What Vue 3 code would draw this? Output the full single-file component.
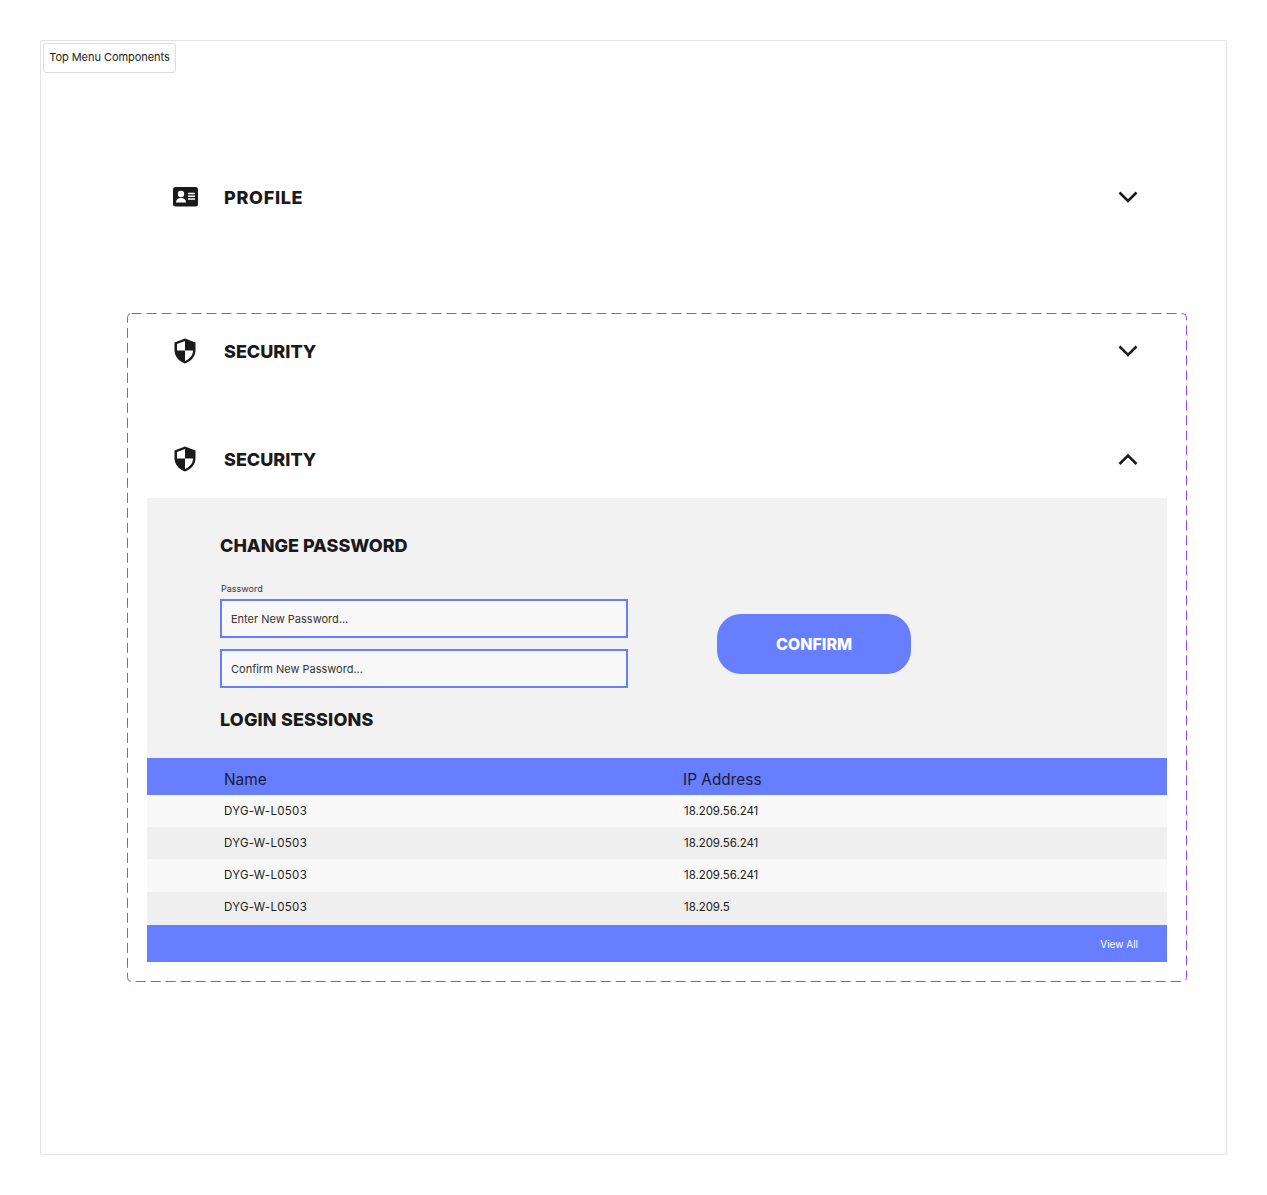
<script setup>
const sessions = [
  { name: 'DYG-W-L0503', ip: '18.209.56.241' },
  { name: 'DYG-W-L0503', ip: '18.209.56.241' },
  { name: 'DYG-W-L0503', ip: '18.209.56.241' },
  { name: 'DYG-W-L0503', ip: '18.209.5' },
]
</script>

<template>
  <div class="page">
    <div class="frame">
      <div class="tag">Top Menu Components</div>

      <div class="row profile">
        <svg class="icon" width="26" height="20" viewBox="0 0 26 20">
          <rect x="0" y="0" width="25" height="19.5" rx="2.5" fill="#1a1a1a" />
          <circle cx="8" cy="7" r="3.2" fill="#fff" />
          <path d="M3 15.5c0-3 2-4.500 5-4.500s5 1.500 5 4.500z" fill="#fff" />
          <path d="M15 6.400h7M15 9.200h7M15 12h7" stroke="#fff" stroke-width="1.5" fill="none" />
        </svg>
        <span class="title title-profile">PROFILE</span>
        <svg class="chev" width="20" height="12" viewBox="0 0 20 12">
          <path d="M1.500 1.500L10 10l8.500-8.500" fill="none" stroke="#1a1a1a" stroke-width="2.500" />
        </svg>
      </div>

      <section class="group">
        <svg class="dash" aria-hidden="true">
          <rect class="dash-rect" x="0.5" y="0.5" rx="4" ry="4" />
        </svg>

        <div class="row first">
          <svg class="icon shield" width="22" height="26" viewBox="0 0 22 26">
            <path d="M11 0.500L21.500 4.500V12c0 6.500-4.300 11.200-10.500 13.500C4.800 23.200.5 18.500.5 12V4.500z" fill="#1a1a1a" />
            <path d="M11 3L3 6v6.500h8zM11 12.500V23c4.700-2 8-5.700 8-10.500z" fill="#fff" />
          </svg>
          <span class="title">SECURITY</span>
          <svg class="chev" width="20" height="12" viewBox="0 0 20 12">
            <path d="M1.500 1.500L10 10l8.500-8.500" fill="none" stroke="#1a1a1a" stroke-width="2.500" />
          </svg>
        </div>

        <div class="row second">
          <svg class="icon shield" width="22" height="26" viewBox="0 0 22 26">
            <path d="M11 0.500L21.500 4.500V12c0 6.500-4.300 11.200-10.500 13.500C4.800 23.200.5 18.500.5 12V4.500z" fill="#1a1a1a" />
            <path d="M11 3L3 6v6.500h8zM11 12.500V23c4.700-2 8-5.700 8-10.500z" fill="#fff" />
          </svg>
          <span class="title">SECURITY</span>
          <svg class="chev" width="20" height="12" viewBox="0 0 20 12">
            <path d="M1.500 11L10 2.500l8.500 8.500" fill="none" stroke="#1a1a1a" stroke-width="2.500" />
          </svg>
        </div>

        <div class="panel">
          <div class="form-area">
            <h2 class="heading">CHANGE PASSWORD</h2>
            <div class="form-row">
              <div class="fields">
                <label class="label">Password</label>
                <input class="field" type="text" placeholder="Enter New Password..." />
                <input class="field" type="text" placeholder="Confirm New Password..." />
              </div>
              <button class="confirm" type="button">CONFIRM</button>
            </div>
            <h2 class="heading login">LOGIN SESSIONS</h2>
          </div>

          <div class="thead">
            <span>Name</span>
            <span>IP Address</span>
          </div>
          <div v-for="(s, i) in sessions" :key="i" class="tr">
            <span>{{ s.name }}</span>
            <span class="ip">{{ s.ip }}</span>
          </div>
          <div class="tfoot"><span>View All</span></div>
        </div>
      </section>
    </div>
  </div>
</template>

<style scoped>
.page {
  padding: 40px;
  height: 1195px;
  box-sizing: border-box;
  background: #fff;
  font-family: "Inter", "Liberation Sans", sans-serif;
  color: #1a1a1a;
}
.frame {
  position: relative;
  box-sizing: border-box;
  height: 1115px;
  border: 1px solid #e3e3e3;
  border-radius: 2px;
  padding: 117px 39px 0 86px;
}
.tag {
  position: absolute;
  left: 2px;
  top: 2px;
  box-sizing: border-box;
  height: 30px;
  width: 133px;
  padding-bottom: 2px;
  display: flex;
  align-items: center;
  justify-content: center;
  border: 1px solid #dcdcdc;
  border-radius: 3px;
  font-size: 11px;
  letter-spacing: -0.05px;
  color: #222;
}
.row {
  display: flex;
  align-items: center;
  height: 78px;
  padding: 0 28px 0 46px;
}
.icon { flex: none; }
.shield { margin: 0 2px 0 1px; }
.title {
  margin-left: 26px;
  font-size: 18px;
  font-weight: 800;
  color: #1a1a1a;
  flex: 1;
}
.title-profile { margin-left: 25px; letter-spacing: 0.7px; }
.chev { flex: none; }
.profile { margin-bottom: 77px; padding-right: 49px; }
.group {
  position: relative;
  display: flow-root;
  height: 669px;
  box-sizing: border-box;
  padding: 0 20px 20px;
}
.dash {
  position: absolute;
  inset: 0;
  width: 100%;
  height: 100%;
  pointer-events: none;
}
.dash-rect {
  width: calc(100% - 1px);
  height: calc(100% - 1px);
  fill: none;
  stroke: #9747ff;
  stroke-width: 1;
  stroke-dasharray: 10 5;
}
.group .row { padding: 0 29px 0 26px; }
.first { margin-top: -1px; }
.second { margin-top: 30px; }
.panel {
  background: #f2f2f2;
  height: 464px;
}
.form-area {
  height: 260px;
  box-sizing: border-box;
  padding: 37px 0 0 73px;
}
.heading {
  margin: 0;
  font-size: 18px;
  line-height: 22px;
  font-weight: 800;
  color: #1a1a1a;
}
.form-row {
  display: flex;
  align-items: flex-start;
  margin-top: 26px;
}
.fields {
  display: flex;
  flex-direction: column;
  width: 408px;
}
.label {
  font-size: 9px;
  line-height: 12px;
  margin: 0 0 4px 1px;
  color: #333;
}
.field {
  box-sizing: border-box;
  width: 408px;
  height: 39px;
  border: 2px solid #667eff;
  background: #f8f8f8;
  padding: 0 9px;
  border-radius: 0;
  outline: none;
  font-family: inherit;
  font-size: 11px;
  color: #333;
}
.field::placeholder { color: #333; opacity: 1; }
.field + .field { margin-top: 11px; }
.confirm {
  margin: 31px 0 0 89px;
  width: 194px;
  height: 60px;
  border: 0;
  border-radius: 24px;
  background: #667eff;
  color: #fff;
  font-family: inherit;
  font-size: 16px;
  font-weight: 800;
}
.login { margin-top: 21px; letter-spacing: 0.15px; }
.thead, .tr {
  display: grid;
  grid-template-columns: 459px 1fr;
  padding-left: 77px;
}
.thead {
  height: 37px;
  background: #667eff;
  font-size: 15.400px;
  color: #1b1b33;
  padding-top: 12px;
  line-height: 19px;
  box-sizing: border-box;
}
.tr {
  box-sizing: border-box;
  height: 32px;
  padding-top: 9px;
  line-height: 14px;
  font-size: 11.500px;
  letter-spacing: 0.3px;
  color: #1a1a1a;
}
.ip { margin-left: 1px; letter-spacing: -0.05px; }
.tr:nth-child(odd) { background: #f9f9f9; }
.tr:nth-child(even) { background: #efefef; }
.tr:nth-child(n+5) { height: 33px; }
.tr:nth-child(6) { padding-top: 8px; }
.tfoot {
  height: 37px;
  background: #667eff;
  display: flex;
  align-items: center;
  justify-content: flex-end;
  padding-right: 29px;
  padding-top: 1px;
  box-sizing: border-box;
  font-size: 10px;
  color: #fff;
}
</style>

<style>
html, body { margin: 0; background: #fff; }
</style>
